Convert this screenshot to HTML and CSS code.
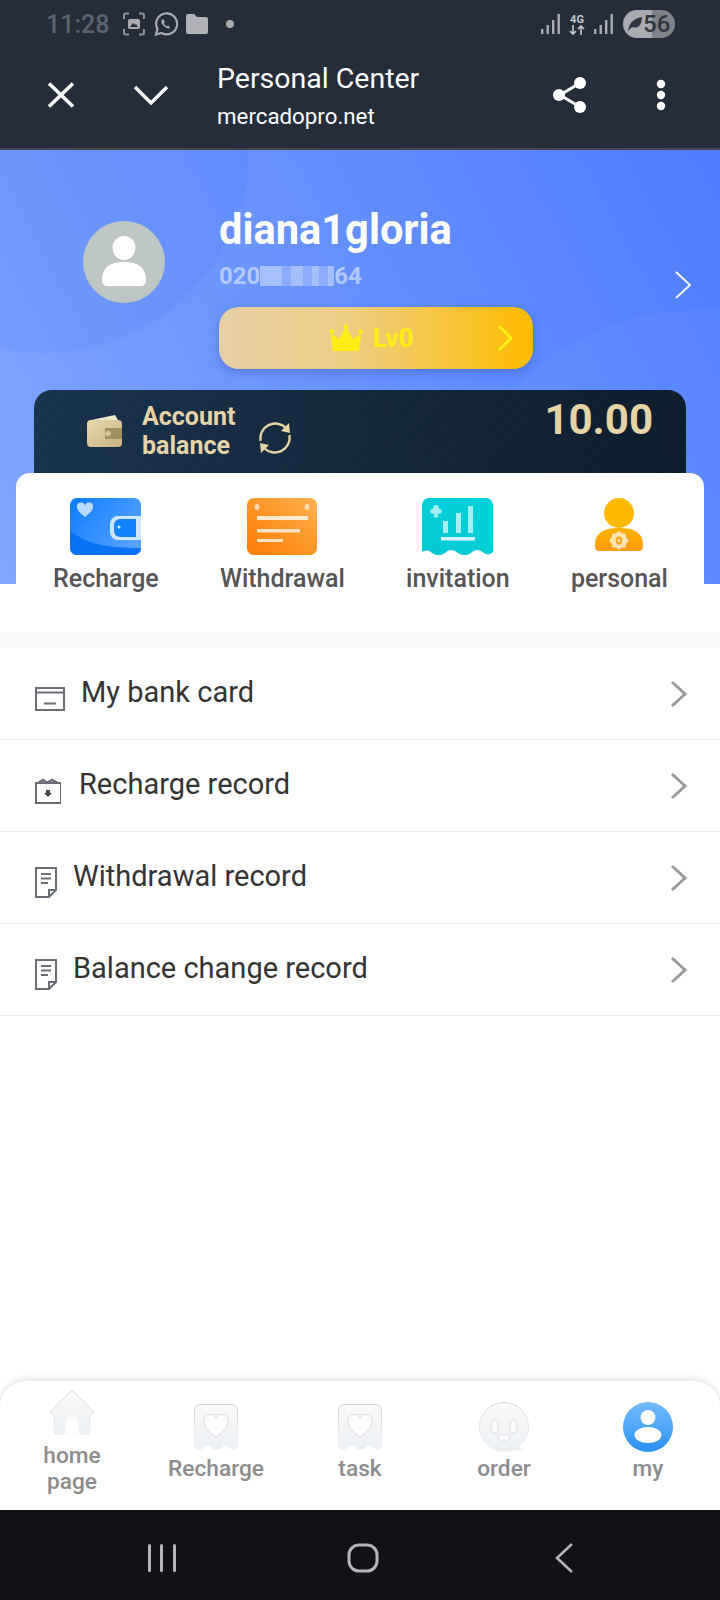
FILE: index.html
```html
<!DOCTYPE html>
<html lang="en">

<head>
  <meta charset="UTF-8">
  <meta name="viewport" content="width=device-width, initial-scale=1.0">
  <title>Personal Center</title>
  <link rel="stylesheet" href="styles.css">
</head>

<body>
  <div class="phone">
    <!-- browser chrome -->
    <header class="top">
      <div class="status">
        <span class="time">11:28</span>
        <svg class="st-icon" width="24" height="24" viewBox="0 0 24 24" fill="none" stroke="#8f9298" stroke-width="2">
          <path d="M2 7V3a1.500 1.500 0 0 1 1.500-1.500H7M17 1.500h3.500A1.500 1.500 0 0 1 22 3v4M22 17v4a1.500 1.500 0 0 1-1.500 1.500H17M7 22.500H3.500A1.500 1.500 0 0 1 2 21v-4" />
          <rect x="6" y="7" width="12" height="10" rx="2" fill="#a9abb0" stroke="none" />
          <path d="M8 15l3-4 2 2 1-1 2 3z" fill="#252d3a" stroke="none" />
        </svg>
        <svg class="st-icon" width="24" height="24" viewBox="0 0 24 24" fill="none" stroke="#a9abb0" stroke-width="2.200">
          <path d="M2 22.500l1.500-5.500A10.500 10.500 0 1 1 7.500 21z" />
          <path d="M8 7.500c-1.500 2 0 5 2 6.800s4.500 3 6.300 1.500l-2-2.300-1.600.8c-1.200-.6-2.300-1.800-2.800-3l.9-1.500-1.500-2.500z" fill="#a9abb0" stroke="none" />
        </svg>
        <svg class="st-icon" width="22" height="20" viewBox="0 0 22 20">
          <path d="M0 2a2 2 0 0 1 2-2h6l3 3h9a2 2 0 0 1 2 2v13a2 2 0 0 1-2 2H2a2 2 0 0 1-2-2z" fill="#b0b2b7" />
        </svg>
        <span class="st-dot"></span>
        <div class="st-right">
          <svg width="19" height="20" viewBox="0 0 19 20" fill="#a9acb1">
            <rect x="0" y="15" width="2.400" height="5" />
            <rect x="5.500" y="11" width="2.400" height="9" />
            <rect x="11" y="6" width="2.400" height="14" />
            <rect x="16.500" y="0" width="2.400" height="20" />
          </svg>
          <span class="net">4G<svg width="18" height="10" viewBox="0 0 18 10" fill="none" stroke="#c6c8cb" stroke-width="1.600"><path d="M5 0v9M2 6l3 3 3-3M13 10V1M10 4l3-3 3 3" /></svg></span>
          <svg width="19" height="20" viewBox="0 0 19 20" fill="#a9acb1">
            <rect x="0" y="15" width="2.400" height="5" />
            <rect x="5.500" y="11" width="2.400" height="9" />
            <rect x="11" y="6" width="2.400" height="14" />
            <rect x="16.500" y="0" width="2.400" height="20" />
          </svg>
          <div class="battery">
            <svg width="16" height="16" viewBox="0 0 16 16"><path d="M1 15C2 11 3 3 15 1c0 9-5 12-10 10z" fill="#303641" /></svg>
            <span>56</span>
          </div>
        </div>
      </div>
      <div class="toolbar">
        <svg class="tb-close" width="28" height="26" viewBox="0 0 28 26" fill="none" stroke="#fff" stroke-width="3.600">
          <path d="M2 1.500l24 23M26 1.500l-24 23" />
        </svg>
        <svg class="tb-down" width="36" height="20" viewBox="0 0 36 20" fill="none" stroke="#fff" stroke-width="3.400">
          <path d="M2 2l16 16L34 2" />
        </svg>
        <div class="tb-title">
          <div class="tb-name">Personal Center</div>
          <div class="tb-url">mercadopro.net</div>
        </div>
        <svg class="tb-share" width="36" height="38" viewBox="0 0 36 38" fill="#fff" stroke="#fff">
          <path d="M28 7L8 19l20 12" fill="none" stroke-width="3" />
          <circle cx="28" cy="7" r="6" stroke="none" />
          <circle cx="7" cy="19" r="6" stroke="none" />
          <circle cx="28" cy="31" r="6" stroke="none" />
        </svg>
        <svg class="tb-more" width="10" height="32" viewBox="0 0 10 32" fill="#fff">
          <circle cx="5" cy="5" r="4.200" />
          <circle cx="5" cy="16" r="4.200" />
          <circle cx="5" cy="27" r="4.200" />
        </svg>
      </div>
    </header>

    <section class="hero">
      <div class="profile">
        <div class="avatar">
          <svg width="44" height="52" viewBox="0 0 44 52" fill="#fff">
            <ellipse cx="22" cy="12" rx="11.500" ry="12" />
            <path d="M0 44c0-14 10-18 22-18s22 4 22 18c0 4-2 6-6 6H6c-4 0-6-2-6-6z" />
          </svg>
        </div>
        <div class="info">
          <div class="name">diana1gloria</div>
          <div class="phone-no">020<span class="masked"></span>64</div>
          <div class="level">
            <svg width="34" height="28" viewBox="0 0 34 28" fill="#ffee14">
              <path d="M4 27L1.500 9l8.500 6L17 3l7 12 8.500-6L30 27z" />
              <circle cx="2.500" cy="7.500" r="2.300" />
              <circle cx="17" cy="2.500" r="2.300" />
              <circle cx="31.500" cy="7.500" r="2.300" />
            </svg>
            <span>Lv0</span>
            <svg class="level-arrow" width="16" height="26" viewBox="0 0 16 26" fill="none" stroke="#ffee14" stroke-width="3">
              <path d="M2 1l12 12L2 25" />
            </svg>
          </div>
        </div>
        <svg class="profile-arrow" width="18" height="28" viewBox="0 0 18 28" fill="none" stroke="#fff" stroke-width="1.800">
          <path d="M2 1l14 13L2 27" />
        </svg>
      </div>

      <div class="balance">
        <svg class="wallet" width="36" height="32" viewBox="0 0 36 32">
          <defs>
            <linearGradient id="walletFill" x1="0" y1="0" x2="1" y2="1">
              <stop offset="0" stop-color="#e8d8ae" />
              <stop offset="1" stop-color="#c9b283" />
            </linearGradient>
          </defs>
          <path d="M4 5L28 0l3 5z" fill="#f0e6cd" />
          <rect x="0" y="5" width="35" height="27" rx="4" fill="url(#walletFill)" />
          <rect x="18" y="13" width="17" height="11" fill="#a08f62" />
          <circle cx="21" cy="18.500" r="2.800" fill="#d9c89d" />
        </svg>
        <div class="balance-label">Account<br>balance</div>
        <svg class="refresh" width="36" height="36" viewBox="0 0 36 36" fill="none" stroke="#e6d3a6" stroke-width="2.400">
          <path d="M3.500 21A15 15 0 0 1 29 8" />
          <path d="M32.500 15A15 15 0 0 1 7 28" />
          <path d="M32 3l1 10-9-2z" fill="#e6d3a6" stroke="none" />
          <path d="M4 33L3 23l9 2z" fill="#e6d3a6" stroke="none" />
        </svg>
        <div class="balance-value">10.00</div>
      </div>
    </section>

    <section class="quick">
      <div class="quick-item">
        <svg width="71" height="57" viewBox="0 0 71 57">
          <defs>
            <linearGradient id="qBlue" x1="0" y1="0" x2="1" y2="0.600">
              <stop offset="0" stop-color="#0c7cff" />
              <stop offset="1" stop-color="#55a2ff" />
            </linearGradient>
          </defs>
          <rect width="71" height="57" rx="7" fill="url(#qBlue)" />
          <path d="M0 32c14 14 38 18 71 18v0a7 7 0 0 1-7 7H7a7 7 0 0 1-7-7z" fill="#0a72f5" />
          <path d="M15 19C10 15 7 12 7 9a4 4 0 0 1 8-1 4 4 0 0 1 8 1c0 3-3 6-8 10z" fill="#b9dcff" />
          <path d="M71 18H48a8 8 0 0 0-8 8v8a8 8 0 0 0 8 8h23z" fill="#cfe6ff" />
          <path d="M66 21H50a6 6 0 0 0-6 6v6a6 6 0 0 0 6 6h16z" fill="#1583ff" />
          <circle cx="49" cy="29" r="1.600" fill="#cfe6ff" />
        </svg>
        <span>Recharge</span>
      </div>
      <div class="quick-item">
        <svg width="70" height="57" viewBox="0 0 70 57">
          <defs>
            <linearGradient id="qOrange" x1="0" y1="1" x2="1" y2="0">
              <stop offset="0" stop-color="#fb7a00" />
              <stop offset="1" stop-color="#ffb14f" />
            </linearGradient>
          </defs>
          <rect width="70" height="57" rx="7" fill="url(#qOrange)" />
          <ellipse cx="10" cy="9" rx="2.500" ry="3" fill="#ffd9ad" />
          <ellipse cx="60" cy="9" rx="2.500" ry="3" fill="#ffd9ad" />
          <rect x="10" y="18" width="51" height="4" fill="#ffe9d0" />
          <rect x="10" y="31" width="43" height="3.500" fill="#ffe2c2" />
          <rect x="10" y="41" width="26" height="3" fill="#ffe2c2" />
        </svg>
        <span>Withdrawal</span>
      </div>
      <div class="quick-item">
        <svg width="71" height="57" viewBox="0 0 71 57">
          <defs>
            <linearGradient id="qTeal" x1="0" y1="1" x2="1" y2="0">
              <stop offset="0" stop-color="#07c6d4" />
              <stop offset="1" stop-color="#00d3dc" />
            </linearGradient>
          </defs>
          <path d="M7 0h57a7 7 0 0 1 7 7v47c-3 3-6 3-9 1-5-4-9-4-13 0-4 3-8 3-13 0-5-4-9-4-13 0-5 3-8 3-13 0-4-4-8-2-10-1V7a7 7 0 0 1 7-7z" fill="url(#qTeal)" />
          <path d="M14 7a2.600 2.600 0 0 1 2.500 3.800 2.600 2.600 0 1 1-1 4.400l1 4.300h-5l1-4.300a2.600 2.600 0 1 1-1-4.400A2.600 2.600 0 0 1 14 7z" fill="#a6f0f2" />
          <rect x="21" y="23" width="5" height="12" fill="#a6f0f2" />
          <rect x="34" y="15" width="5" height="20" fill="#a6f0f2" />
          <rect x="46" y="8" width="5" height="27" fill="#a6f0f2" />
          <rect x="19" y="39" width="34" height="3.500" fill="#d4f8f9" />
        </svg>
        <span>invitation</span>
      </div>
      <div class="quick-item">
        <svg width="48" height="57" viewBox="0 0 48 57">
          <defs>
            <linearGradient id="qBody" x1="0" y1="0" x2="0" y2="1">
              <stop offset="0" stop-color="#ffb100" />
              <stop offset="1" stop-color="#ff9a10" />
            </linearGradient>
          </defs>
          <ellipse cx="24" cy="15" rx="15" ry="15" fill="#ffb900" />
          <path d="M0 47c0-13 10-17 24-17s24 4 24 17c0 4-1 6-5 6H5c-4 0-5-2-5-6z" fill="url(#qBody)" />
          <path d="M24 33l3 2.500h3.500l.9 4 2.600 3-2.600 3-.9 4H27L24 52l-3-2.500h-3.500l-.9-4-2.600-3 2.600-3 .9-4H21z" fill="#ffe6b0" />
          <ellipse cx="24" cy="42.500" rx="3.200" ry="4" fill="#ff9f12" />
          <ellipse cx="24" cy="42.500" rx="1.400" ry="2" fill="#ffe6b0" />
        </svg>
        <span>personal</span>
      </div>
    </section>

    <div class="strip"></div>

    <ul class="menu">
      <li class="row">
        <svg class="row-icon gap-16" width="30" height="24" viewBox="0 0 30 24" fill="none" stroke="#6a6d76" stroke-width="2">
          <rect x="1" y="1" width="28" height="22" />
          <path d="M1 5.500h28" />
          <path d="M9 16.500h12" />
        </svg>
        <span>My bank card</span>
        <svg class="row-arrow" width="18" height="28" viewBox="0 0 18 28" fill="none" stroke="#9a9a9a" stroke-width="3">
          <path d="M2 2l13 12L2 26" />
        </svg>
      </li>
      <li class="row">
        <svg class="row-icon gap-18" width="26" height="26" viewBox="0 0 26 26" fill="none" stroke="#6a6d76" stroke-width="2">
          <rect x="1" y="5" width="25" height="20" />
          <path d="M3 5l5-3 4 3 5-3 6 3" stroke-width="2.500" />
          <path d="M11 12h4v3h2l-4 4-4-4h2z" fill="#44464d" stroke="none" />
        </svg>
        <span>Recharge record</span>
        <svg class="row-arrow" width="18" height="28" viewBox="0 0 18 28" fill="none" stroke="#9a9a9a" stroke-width="3">
          <path d="M2 2l13 12L2 26" />
        </svg>
      </li>
      <li class="row">
        <svg class="row-icon gap-16" width="22" height="31" viewBox="0 0 22 31" fill="none" stroke="#6a6d76" stroke-width="2">
          <path d="M1 1h20v22l-7 7H1z" />
          <path d="M14 30v-7h7" />
          <path d="M6 7h10M6 11.500h10M6 16h7" />
        </svg>
        <span>Withdrawal record</span>
        <svg class="row-arrow" width="18" height="28" viewBox="0 0 18 28" fill="none" stroke="#9a9a9a" stroke-width="3">
          <path d="M2 2l13 12L2 26" />
        </svg>
      </li>
      <li class="row">
        <svg class="row-icon gap-16" width="22" height="31" viewBox="0 0 22 31" fill="none" stroke="#6a6d76" stroke-width="2">
          <path d="M1 1h20v22l-7 7H1z" />
          <path d="M14 30v-7h7" />
          <path d="M6 7h10M6 11.500h10M6 16h7" />
        </svg>
        <span>Balance change record</span>
        <svg class="row-arrow" width="18" height="28" viewBox="0 0 18 28" fill="none" stroke="#9a9a9a" stroke-width="3">
          <path d="M2 2l13 12L2 26" />
        </svg>
      </li>
    </ul>

    <nav class="tabs">
      <div class="tab tab-home">
        <svg width="46" height="46" viewBox="0 0 46 46">
          <defs>
            <linearGradient id="softFill" x1="0" y1="0" x2="0" y2="1">
              <stop offset="0" stop-color="#f8f9fa" />
              <stop offset="1" stop-color="#eceff2" />
            </linearGradient>
            <linearGradient id="softLine" x1="0" y1="0" x2="0" y2="1">
              <stop offset="0" stop-color="#d3d6db" />
              <stop offset="1" stop-color="#f0f2f4" />
            </linearGradient>
          </defs>
          <path d="M23 1L44.500 22c1 1.500.5 3-1.500 3h-2v18c0 1.500-1 2.500-2.500 2.500h-31C6 45.500 5 44.500 5 43V25H3c-2 0-2.500-1.500-1.500-3z" fill="url(#softFill)" stroke="url(#softLine)" />
          <path d="M16 45.500V35a7 7 0 0 1 14 0v10.500z" fill="#fdfdfe" />
        </svg>
        <span>home<br>page</span>
      </div>
      <div class="tab">
        <svg width="44" height="50" viewBox="0 -2 44 50">
          <path d="M6 .5h32a5.500 5.500 0 0 1 5.500 5.500v37c-3 3-5 3-8 .5-3-3-6-3-8 0-3 2.500-7 2.500-10 0-3-3-5-3-8 0-3 2.500-5 2.500-9-.5V6A5.500 5.500 0 0 1 6 .5z" fill="url(#softFill)" stroke="url(#softLine)" />
          <path d="M22 33C13 27 10 22 10 17a6.500 6.500 0 0 1 12-3.500A6.500 6.500 0 0 1 34 17c0 5-3 10-12 16z" fill="#fcfcfd" stroke="#d9dce0" />
        </svg>
        <span>Recharge</span>
      </div>
      <div class="tab">
        <svg width="44" height="50" viewBox="0 -2 44 50">
          <path d="M6 .5h32a5.500 5.500 0 0 1 5.500 5.500v37c-3 3-5 3-8 .5-3-3-6-3-8 0-3 2.500-7 2.500-10 0-3-3-5-3-8 0-3 2.500-5 2.500-9-.5V6A5.500 5.500 0 0 1 6 .5z" fill="url(#softFill)" stroke="url(#softLine)" />
          <path d="M22 33C13 27 10 22 10 17a6.500 6.500 0 0 1 12-3.500A6.500 6.500 0 0 1 34 17c0 5-3 10-12 16z" fill="#fcfcfd" stroke="#d9dce0" />
        </svg>
        <span>task</span>
      </div>
      <div class="tab">
        <svg width="50" height="50" viewBox="0 0 50 50">
          <path d="M25 .5a24.500 24.500 0 1 1 0 49 24.500 24.500 0 0 1 0-49z" fill="url(#softFill)" stroke="url(#softLine)" />
          <path d="M36 42l10 7-13-1z" fill="#eceff2" />
          <rect x="12" y="18" width="7" height="13" rx="3.500" fill="#fafbfc" stroke="#dcdfe3" />
          <rect x="31" y="18" width="7" height="13" rx="3.500" fill="#fafbfc" stroke="#dcdfe3" />
          <path d="M19 33h12c0 5-3 6-6 6s-6-1-6-6z" fill="#fafbfc" stroke="#dcdfe3" />
        </svg>
        <span>order</span>
      </div>
      <div class="tab">
        <svg width="50" height="50" viewBox="0 0 50 50">
          <defs>
            <linearGradient id="myBlue" x1="0" y1="0" x2="0" y2="1">
              <stop offset="0" stop-color="#73bbfb" />
              <stop offset="1" stop-color="#2a90f1" />
            </linearGradient>
          </defs>
          <circle cx="25" cy="25" r="25" fill="url(#myBlue)" />
          <ellipse cx="25" cy="15.500" rx="7.500" ry="7.500" fill="#fff" />
          <ellipse cx="25" cy="33" rx="13.500" ry="8" fill="#fff" />
        </svg>
        <span>my</span>
      </div>
    </nav>

    <!-- android buttons -->
    <div class="sysnav">
      <svg width="28" height="28" viewBox="0 0 28 28" fill="#b4b5b9">
        <rect x="0" y="0" width="3" height="28" rx="1.500" />
        <rect x="12" y="0" width="3" height="28" rx="1.500" />
        <rect x="25" y="0" width="3" height="28" rx="1.500" />
      </svg>
      <svg class="sys-home" width="32" height="30" viewBox="0 0 32 30" fill="none" stroke="#b4b5b9" stroke-width="3">
        <rect x="2" y="2" width="28" height="26" rx="10" />
      </svg>
      <svg width="20" height="32" viewBox="0 0 20 32" fill="none" stroke="#b4b5b9" stroke-width="2.600">
        <path d="M18 2L3 16l15 14" />
      </svg>
    </div>
  </div>
</body>

</html>
```

FILE: styles.css
```css
* {
  box-sizing: border-box;
  font-family: Roboto, "Liberation Sans", sans-serif;
}

body {
  margin: 0;
  background: white;
}

.phone {
  width: 720px;
  height: 1600px;
  display: flex;
  flex-direction: column;
  overflow: hidden;
}

/* browser chrome */
.top {
  height: 150px;
  background: #252d3a;
  border-bottom: 2px solid #42464c;
}

.status {
  height: 48px;
  padding: 0 45px 0 46px;
  display: flex;
  align-items: center;
}

.time {
  font-size: 25px;
  font-weight: 500;
  color: #5d636d;
  margin-right: 13px;
}

.st-icon {
  margin-right: 8px;
}

.st-dot {
  width: 8px;
  height: 8px;
  margin-left: 10px;
  border-radius: 50%;
  background: #a9abb0;
}

.st-right {
  margin-left: auto;
  display: flex;
  align-items: center;
  gap: 8px;
}

.net {
  display: flex;
  flex-direction: column;
  align-items: center;
  font-size: 11px;
  font-weight: 700;
  line-height: 11px;
  color: #c6c8cb;
}

.battery {
  width: 52px;
  height: 28px;
  margin-left: 2px;
  border-radius: 14px;
  background: linear-gradient(90deg, #a9abb0 0 56%, #7f8289 56%);
  display: flex;
  align-items: center;
  padding-left: 4px;
  font-size: 24px;
  font-weight: 500;
  color: #303641;
}

.toolbar {
  height: 100px;
  display: flex;
  align-items: center;
  padding-bottom: 6px;
}

.tb-close {
  margin-left: 47px;
}

.tb-down {
  margin-left: 58px;
}

.tb-title {
  margin: 2px 0 0 48px;
  color: white;
}

.tb-name {
  font-size: 28.500px;
  line-height: 36px;
}

.tb-url {
  font-size: 22.300px;
  line-height: 32px;
  margin-top: 3px;
}

.tb-share {
  margin-left: auto;
}

.tb-more {
  margin: 0 54px 0 68px;
}

/* blue header */
.hero {
  position: relative;
  height: 434px;
  padding-top: 55px;
  overflow: hidden;
  background: linear-gradient(62deg, #82a6ff 0%, #6d96ff 38%, #4d7dff 100%);
}

.hero::before {
  content: "";
  position: absolute;
  left: -157px;
  top: -203px;
  width: 406px;
  height: 406px;
  border-radius: 50%;
  background: rgba(70, 115, 255, .13);
}

.hero::after {
  content: "";
  position: absolute;
  left: 440px;
  top: 160px;
  width: 520px;
  height: 520px;
  border-radius: 50%;
  background: rgba(255, 255, 255, .03);
}

.profile {
  position: relative;
  z-index: 1;
  display: flex;
  height: 165px;
}

.avatar {
  width: 82px;
  height: 82px;
  margin: 16px 54px 0 83px;
  border-radius: 50%;
  background: #bdc6c5;
  display: flex;
  align-items: center;
  justify-content: center;
}

.info {
  width: 314px;
}

.name {
  font-size: 41.600px;
  font-weight: 700;
  line-height: 46px;
  margin-top: 2px;
  color: white;
}

.phone-no {
  display: flex;
  align-items: center;
  font-size: 24px;
  font-weight: 700;
  line-height: 28px;
  margin-top: 9px;
  color: rgba(255, 255, 255, .5);
}

.masked {
  width: 74px;
  height: 20px;
  background: linear-gradient(90deg, #a7bfff 0 30%, #8dacff 30% 42%, #a7bfff 42% 58%, #8dacff 58% 70%, #a7bfff 70% 80%, #8dacff 80% 92%, #a7bfff 92%);
}

.level {
  height: 62px;
  margin-top: 17px;
  border-radius: 20px;
  background: linear-gradient(90deg, #e6d1a6 0%, #ecce85 40%, #ffbb00 100%);
  box-shadow: 0 3px 8px rgba(50, 70, 130, .35);
  display: flex;
  align-items: center;
  padding-left: 110px;
  font-size: 26px;
  font-weight: 700;
  color: #ffee14;
}

.level span {
  margin-left: 10px;
}

.level-arrow {
  margin-left: auto;
  margin-right: 20px;
}

.profile-arrow {
  margin: 66px 0 0 141px;
}

.balance {
  position: relative;
  z-index: 1;
  height: 100px;
  margin: 20px 34px 0;
  padding: 12px 33px 0 53px;
  border-radius: 18px 18px 0 0;
  color: #e6d3a6;
  background:
    repeating-linear-gradient(135deg, rgba(255, 255, 255, .025) 0 1px, transparent 1px 3px),
    linear-gradient(90deg, #18324c 0%, #0c1c2b 100%);
  display: flex;
  align-items: flex-start;
}

.wallet {
  margin-top: 13px;
}

.balance-label {
  margin-left: 19px;
  font-size: 25px;
  font-weight: 700;
  line-height: 29px;
  width: 115px;
}

.refresh {
  margin-top: 18px;
}

.balance-value {
  margin-left: auto;
  font-size: 42px;
  font-weight: 700;
  line-height: 36px;
}

/* shortcuts */
.quick {
  position: relative;
  z-index: 2;
  height: 159px;
  margin: -111px 16px 0;
  padding: 25px 36px 0 37px;
  border-radius: 14px 14px 0 0;
  background: white;
  display: flex;
  justify-content: space-between;
}

.quick-item {
  display: flex;
  flex-direction: column;
  align-items: center;
  gap: 9px;
  font-size: 25px;
  font-weight: 500;
  line-height: 30px;
  color: #555;
}

.strip {
  height: 16px;
  background: #f7f8f8;
}

/* list */
.menu {
  list-style: none;
  margin: 0;
  padding: 0;
  flex: 1;
}

.row {
  height: 92px;
  padding: 0 32px 0 35px;
  border-bottom: 1px solid #eeeeee;
  display: flex;
  align-items: center;
  font-size: 29px;
  color: #333;
}

.row span {
  margin-top: -3px;
}

.row-icon {
  margin-top: 10px;
}

.gap-16 {
  margin-right: 16px;
}

.gap-18 {
  margin-right: 18px;
}

.row-arrow {
  margin-left: auto;
}

/* bottom tabs */
.tabs {
  height: 129px;
  flex-shrink: 0;
  border-radius: 26px 26px 0 0;
  background: white;
  box-shadow: 0 -2px 6px rgba(0, 0, 0, .12);
  display: grid;
  grid-template-columns: repeat(5, 1fr);
  padding-bottom: 8px;
}

.tab {
  display: flex;
  flex-direction: column;
  align-items: center;
  justify-content: center;
  gap: 4px;
  font-size: 22.700px;
  font-weight: 500;
  line-height: 26px;
  text-align: center;
  color: #8c8c8c;
}

.tab-home {
  gap: 8px;
}

.sysnav {
  height: 90px;
  flex-shrink: 0;
  background: #111217;
  padding: 6px 146px 0 148px;
  display: flex;
  align-items: center;
  justify-content: space-between;
}

.sys-home {
  margin-right: 4px;
}
```
